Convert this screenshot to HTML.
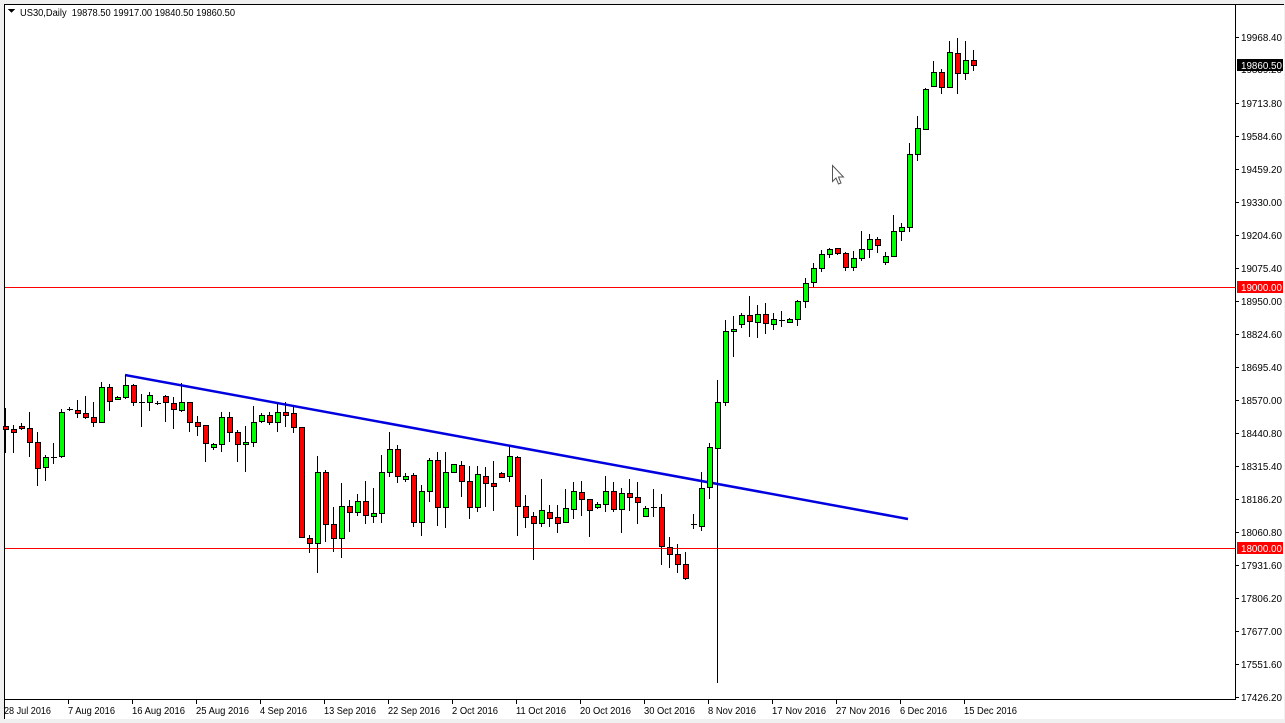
<!DOCTYPE html>
<html><head><meta charset="utf-8"><style>
html,body{margin:0;padding:0;width:1285px;height:723px;overflow:hidden;background:#f0f0f0}
svg{display:block}
text{font-family:"Liberation Sans",sans-serif;font-size:10px;fill:#000}
</style></head><body>
<svg width="1285" height="723" viewBox="0 0 1285 723" xmlns="http://www.w3.org/2000/svg" shape-rendering="crispEdges">
<rect x="0" y="0" width="1285" height="723" fill="#f0f0f0"/>
<rect x="4" y="4" width="1280" height="715" fill="#fff"/>
<path d="M4.5 4V719M4 4.5H1284" stroke="#000" fill="none"/>
<path d="M1235.5 4V700M4 699.5H1236" stroke="#000" fill="none"/>
<path d="M1235 37.5h4M1235 103.5h4M1235 136.5h4M1235 169.5h4M1235 202.5h4M1235 235.5h4M1235 268.5h4M1235 301.5h4M1235 334.5h4M1235 367.5h4M1235 400.5h4M1235 433.5h4M1235 466.5h4M1235 499.5h4M1235 532.5h4M1235 565.5h4M1235 598.5h4M1235 631.5h4M1235 664.5h4M1235 697.5h4" stroke="#000"/>
<path d="M4.5 699v5M68.5 699v5M132.5 699v5M196.5 699v5M260.5 699v5M324.5 699v5M388.5 699v5M452.5 699v5M516.5 699v5M580.5 699v5M644.5 699v5M708.5 699v5M772.5 699v5M836.5 699v5M900.5 699v5M964.5 699v5" stroke="#000"/>
<rect x="5" y="287" width="1230" height="1" fill="#ff0000"/>
<rect x="5" y="548" width="1230" height="1" fill="#ff0000"/>
<line x1="125" y1="375" x2="908" y2="519" stroke="#0000e0" stroke-width="2.5" shape-rendering="auto"/>
<path stroke="#000" fill="none" d="M5.5 408V453M13.5 425V453M21.5 423V430M29.5 412V457M37.5 432V486M45.5 455V481M53.5 443V464M61.5 409V458M69.5 407V411M77.5 400V418M85.5 396V419M93.5 402V427M101.5 382V422M109.5 384V411M117.5 396V400M125.5 375V399M133.5 384V406M141.5 394V427M149.5 392V411M157.5 401V405M165.5 395V422M173.5 397V429M181.5 383V412M189.5 402V432M197.5 416V436M205.5 425V462M213.5 443V450M221.5 412V452M229.5 412V442M237.5 430V462M245.5 426V472M253.5 406V447M261.5 413V423M269.5 412V425M277.5 403V432M285.5 402V427M293.5 406V433M301.5 427V537M309.5 535V553M317.5 456V573M325.5 470V542M333.5 507V552M341.5 483V558M349.5 500V532M357.5 494V516M365.5 481V524M373.5 488V523M381.5 455V523M389.5 432V477M397.5 445V483M405.5 473V482M413.5 473V527M421.5 485V536M429.5 458V502M437.5 452V526M445.5 452V528M453.5 464V472M461.5 461V497M469.5 466V519M477.5 466V512M485.5 467V507M493.5 461V511M501.5 472V478M509.5 446V482M517.5 456V536M525.5 495V528M533.5 512V560M541.5 479V527M549.5 505V527M557.5 505V533M565.5 489V523M573.5 482V519M581.5 481V516M589.5 499V537M597.5 502V509M605.5 476V512M613.5 482V512M621.5 488V533M629.5 479V511M637.5 482V524M645.5 506V517M653.5 489V517M661.5 494V565M669.5 537V568M677.5 544V573M685.5 552V580M693.5 514V529M701.5 472V531M709.5 443V499M717.5 380V683M725.5 320V406M733.5 316V357M741.5 313V328M749.5 296V337M757.5 305V338M765.5 303V334M773.5 313V330M781.5 311V327M789.5 318V323M797.5 300V326M805.5 278V308M813.5 263V287M821.5 250V272M829.5 248V258M837.5 248V255M845.5 252V271M853.5 251V271M861.5 231V261M869.5 234V258M877.5 237V253M885.5 252V265M893.5 215V257M901.5 223V241M909.5 143V232M917.5 116V161M925.5 88V130M933.5 61V87M941.5 69V94M949.5 41V87M957.5 38V94M965.5 41V80M973.5 50V71"/>
<path stroke="#000" d="M51 457.5h6M67 409.5h6M139 402.5h6M155 403.5h6M651 507.5h6M691 524.5h6M779 320.5h6"/>
<g stroke="#000" stroke-width="1">
<g fill="#ff0000">
<rect x="3.5" y="426.5" width="5" height="3"/><rect x="11.5" y="429.5" width="5" height="3"/><rect x="19.5" y="426.5" width="5" height="2"/><rect x="27.5" y="428.5" width="5" height="14"/><rect x="35.5" y="442.5" width="5" height="26"/><rect x="75.5" y="410.5" width="5" height="3"/><rect x="83.5" y="413.5" width="5" height="4"/><rect x="91.5" y="417.5" width="5" height="5"/><rect x="107.5" y="387.5" width="5" height="14"/><rect x="131.5" y="385.5" width="5" height="17"/><rect x="163.5" y="396.5" width="5" height="6"/><rect x="171.5" y="403.5" width="5" height="6"/><rect x="187.5" y="402.5" width="5" height="20"/><rect x="195.5" y="422.5" width="5" height="4"/><rect x="203.5" y="425.5" width="5" height="18"/><rect x="227.5" y="417.5" width="5" height="15"/><rect x="235.5" y="432.5" width="5" height="12"/><rect x="267.5" y="415.5" width="5" height="7"/><rect x="283.5" y="412.5" width="5" height="3"/><rect x="291.5" y="413.5" width="5" height="14"/><rect x="299.5" y="427.5" width="5" height="110"/><rect x="307.5" y="538.5" width="5" height="5"/><rect x="323.5" y="472.5" width="5" height="52"/><rect x="331.5" y="524.5" width="5" height="14"/><rect x="347.5" y="506.5" width="5" height="6"/><rect x="363.5" y="501.5" width="5" height="14"/><rect x="395.5" y="449.5" width="5" height="27"/><rect x="411.5" y="475.5" width="5" height="47"/><rect x="435.5" y="460.5" width="5" height="47"/><rect x="459.5" y="465.5" width="5" height="16"/><rect x="467.5" y="481.5" width="5" height="26"/><rect x="483.5" y="476.5" width="5" height="7"/><rect x="491.5" y="483.5" width="5" height="3"/><rect x="499.5" y="473.5" width="5" height="4"/><rect x="515.5" y="457.5" width="5" height="49"/><rect x="523.5" y="506.5" width="5" height="11"/><rect x="531.5" y="516.5" width="5" height="7"/><rect x="547.5" y="512.5" width="5" height="6"/><rect x="555.5" y="517.5" width="5" height="6"/><rect x="579.5" y="492.5" width="5" height="7"/><rect x="587.5" y="499.5" width="5" height="11"/><rect x="611.5" y="491.5" width="5" height="18"/><rect x="627.5" y="493.5" width="5" height="4"/><rect x="635.5" y="497.5" width="5" height="5"/><rect x="659.5" y="507.5" width="5" height="39"/><rect x="667.5" y="547.5" width="5" height="7"/><rect x="675.5" y="554.5" width="5" height="10"/><rect x="683.5" y="564.5" width="5" height="14"/><rect x="747.5" y="315.5" width="5" height="6"/><rect x="763.5" y="314.5" width="5" height="9"/><rect x="835.5" y="248.5" width="5" height="5"/><rect x="843.5" y="253.5" width="5" height="14"/><rect x="875.5" y="239.5" width="5" height="6"/><rect x="939.5" y="72.5" width="5" height="15"/><rect x="955.5" y="53.5" width="5" height="20"/><rect x="971.5" y="60.5" width="5" height="5"/>
</g>
<g fill="#00ff00">
<rect x="43.5" y="457.5" width="5" height="10"/><rect x="59.5" y="412.5" width="5" height="44"/><rect x="99.5" y="387.5" width="5" height="35"/><rect x="115.5" y="397.5" width="5" height="2"/><rect x="123.5" y="385.5" width="5" height="12"/><rect x="147.5" y="395.5" width="5" height="7"/><rect x="179.5" y="402.5" width="5" height="8"/><rect x="211.5" y="444.5" width="5" height="3"/><rect x="219.5" y="417.5" width="5" height="27"/><rect x="243.5" y="442.5" width="5" height="2"/><rect x="251.5" y="422.5" width="5" height="20"/><rect x="259.5" y="415.5" width="5" height="6"/><rect x="275.5" y="412.5" width="5" height="10"/><rect x="315.5" y="472.5" width="5" height="71"/><rect x="339.5" y="506.5" width="5" height="32"/><rect x="355.5" y="501.5" width="5" height="11"/><rect x="371.5" y="513.5" width="5" height="3"/><rect x="379.5" y="472.5" width="5" height="41"/><rect x="387.5" y="449.5" width="5" height="23"/><rect x="403.5" y="476.5" width="5" height="3"/><rect x="419.5" y="491.5" width="5" height="31"/><rect x="427.5" y="460.5" width="5" height="31"/><rect x="443.5" y="472.5" width="5" height="35"/><rect x="451.5" y="464.5" width="5" height="8"/><rect x="475.5" y="474.5" width="5" height="33"/><rect x="507.5" y="456.5" width="5" height="20"/><rect x="539.5" y="510.5" width="5" height="13"/><rect x="563.5" y="508.5" width="5" height="14"/><rect x="571.5" y="491.5" width="5" height="18"/><rect x="595.5" y="504.5" width="5" height="3"/><rect x="603.5" y="491.5" width="5" height="13"/><rect x="619.5" y="493.5" width="5" height="16"/><rect x="643.5" y="508.5" width="5" height="8"/><rect x="699.5" y="488.5" width="5" height="38"/><rect x="707.5" y="447.5" width="5" height="40"/><rect x="715.5" y="402.5" width="5" height="46"/><rect x="723.5" y="331.5" width="5" height="71"/><rect x="731.5" y="329.5" width="5" height="2"/><rect x="739.5" y="315.5" width="5" height="9"/><rect x="755.5" y="314.5" width="5" height="8"/><rect x="771.5" y="319.5" width="5" height="5"/><rect x="787.5" y="319.5" width="5" height="3"/><rect x="795.5" y="301.5" width="5" height="18"/><rect x="803.5" y="283.5" width="5" height="18"/><rect x="811.5" y="268.5" width="5" height="14"/><rect x="819.5" y="254.5" width="5" height="14"/><rect x="827.5" y="249.5" width="5" height="5"/><rect x="851.5" y="258.5" width="5" height="9"/><rect x="859.5" y="249.5" width="5" height="9"/><rect x="867.5" y="239.5" width="5" height="10"/><rect x="883.5" y="256.5" width="5" height="6"/><rect x="891.5" y="231.5" width="5" height="25"/><rect x="899.5" y="227.5" width="5" height="4"/><rect x="907.5" y="154.5" width="5" height="73"/><rect x="915.5" y="128.5" width="5" height="26"/><rect x="923.5" y="89.5" width="5" height="40"/><rect x="931.5" y="72.5" width="5" height="14"/><rect x="947.5" y="52.5" width="5" height="35"/><rect x="963.5" y="60.5" width="5" height="13"/>
</g>
</g>
<path d="M832.5 165.5V181.5L836 178L838.5 184L841 183L838.5 177L843.5 177Z" fill="#fff" stroke="#555" shape-rendering="auto"/>
<path d="M8 9h7l-3.5 4z" fill="#000"/>
<text x="20" y="16" textLength="215" lengthAdjust="spacingAndGlyphs">US30,Daily&#160; 19878.50 19917.00 19840.50 19860.50</text>
<g>
<text x="1241" y="41" textLength="41" lengthAdjust="spacingAndGlyphs">19968.40</text>
<text x="1241" y="73" textLength="41" lengthAdjust="spacingAndGlyphs">19839.20</text>
<rect x="1237" y="59" width="46" height="12" fill="#000"/>
<text x="1241" y="69" textLength="41" lengthAdjust="spacingAndGlyphs" style="fill:#fff">19860.50</text>
<text x="1241" y="107" textLength="41" lengthAdjust="spacingAndGlyphs">19713.80</text>
<text x="1241" y="140" textLength="41" lengthAdjust="spacingAndGlyphs">19584.60</text>
<text x="1241" y="173" textLength="41" lengthAdjust="spacingAndGlyphs">19459.20</text>
<text x="1241" y="206" textLength="41" lengthAdjust="spacingAndGlyphs">19330.00</text>
<text x="1241" y="239" textLength="41" lengthAdjust="spacingAndGlyphs">19204.60</text>
<text x="1241" y="272" textLength="41" lengthAdjust="spacingAndGlyphs">19075.40</text>
<rect x="1237" y="281" width="46" height="12" fill="#ff0000"/>
<text x="1241" y="291" textLength="41" lengthAdjust="spacingAndGlyphs" style="fill:#fff">19000.00</text>
<text x="1241" y="305" textLength="41" lengthAdjust="spacingAndGlyphs">18950.00</text>
<text x="1241" y="338" textLength="41" lengthAdjust="spacingAndGlyphs">18824.60</text>
<text x="1241" y="371" textLength="41" lengthAdjust="spacingAndGlyphs">18695.40</text>
<text x="1241" y="404" textLength="41" lengthAdjust="spacingAndGlyphs">18570.00</text>
<text x="1241" y="437" textLength="41" lengthAdjust="spacingAndGlyphs">18440.80</text>
<text x="1241" y="470" textLength="41" lengthAdjust="spacingAndGlyphs">18315.40</text>
<text x="1241" y="503" textLength="41" lengthAdjust="spacingAndGlyphs">18186.20</text>
<text x="1241" y="536" textLength="41" lengthAdjust="spacingAndGlyphs">18060.80</text>
<rect x="1237" y="542" width="46" height="12" fill="#ff0000"/>
<text x="1241" y="552" textLength="41" lengthAdjust="spacingAndGlyphs" style="fill:#fff">18000.00</text>
<text x="1241" y="569" textLength="41" lengthAdjust="spacingAndGlyphs">17931.60</text>
<text x="1241" y="602" textLength="41" lengthAdjust="spacingAndGlyphs">17806.20</text>
<text x="1241" y="635" textLength="41" lengthAdjust="spacingAndGlyphs">17677.00</text>
<text x="1241" y="668" textLength="41" lengthAdjust="spacingAndGlyphs">17551.60</text>
<text x="1241" y="701" textLength="41" lengthAdjust="spacingAndGlyphs">17426.20</text>
</g>
<g>
<text x="4" y="714" textLength="47" lengthAdjust="spacingAndGlyphs">28 Jul 2016</text>
<text x="68" y="714" textLength="47" lengthAdjust="spacingAndGlyphs">7 Aug 2016</text>
<text x="132" y="714" textLength="53" lengthAdjust="spacingAndGlyphs">16 Aug 2016</text>
<text x="196" y="714" textLength="53" lengthAdjust="spacingAndGlyphs">25 Aug 2016</text>
<text x="260" y="714" textLength="47" lengthAdjust="spacingAndGlyphs">4 Sep 2016</text>
<text x="324" y="714" textLength="52" lengthAdjust="spacingAndGlyphs">13 Sep 2016</text>
<text x="388" y="714" textLength="52" lengthAdjust="spacingAndGlyphs">22 Sep 2016</text>
<text x="452" y="714" textLength="46" lengthAdjust="spacingAndGlyphs">2 Oct 2016</text>
<text x="516" y="714" textLength="50" lengthAdjust="spacingAndGlyphs">11 Oct 2016</text>
<text x="580" y="714" textLength="51" lengthAdjust="spacingAndGlyphs">20 Oct 2016</text>
<text x="644" y="714" textLength="51" lengthAdjust="spacingAndGlyphs">30 Oct 2016</text>
<text x="708" y="714" textLength="48" lengthAdjust="spacingAndGlyphs">8 Nov 2016</text>
<text x="772" y="714" textLength="54" lengthAdjust="spacingAndGlyphs">17 Nov 2016</text>
<text x="836" y="714" textLength="54" lengthAdjust="spacingAndGlyphs">27 Nov 2016</text>
<text x="900" y="714" textLength="47" lengthAdjust="spacingAndGlyphs">6 Dec 2016</text>
<text x="964" y="714" textLength="53" lengthAdjust="spacingAndGlyphs">15 Dec 2016</text>
</g>
</svg>
</body></html>
